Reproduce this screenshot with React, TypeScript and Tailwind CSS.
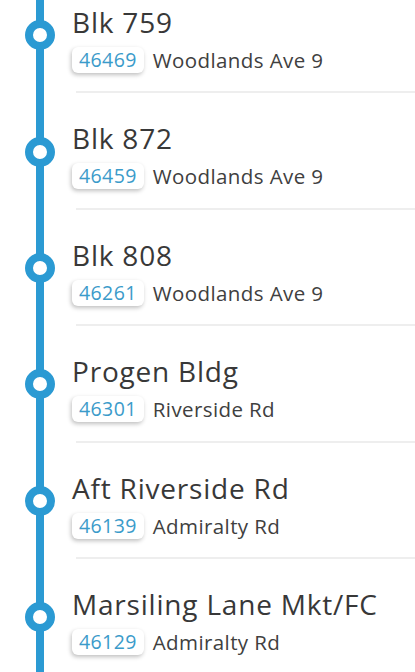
const stops = [
  { name: 'Blk 759', code: '46469', road: 'Woodlands Ave 9' },
  { name: 'Blk 872', code: '46459', road: 'Woodlands Ave 9' },
  { name: 'Blk 808', code: '46261', road: 'Woodlands Ave 9' },
  { name: 'Progen Bldg', code: '46301', road: 'Riverside Rd' },
  { name: 'Aft Riverside Rd', code: '46139', road: 'Admiralty Rd' },
  { name: 'Marsiling Lane Mkt/FC', code: '46129', road: 'Admiralty Rd' },
]

export default function App() {
  return (
    <div className="h-[672px] w-[415px] overflow-hidden bg-white" style={{ fontFamily: '"Open Sans", sans-serif' }}>
      <div className="-mt-[23px]">
        {stops.map((s) => (
          <div key={s.code} className="flex h-[116.4px]">
            {/* timeline */}
            <div className="relative w-[72px] shrink-0">
              <div className="absolute left-[36px] top-0 bottom-0 w-2 bg-[#2b9ad3]" />
              <div className="absolute left-[25px] top-1/2 -translate-y-1/2 size-[30px] rounded-full border-8 border-[#2b9ad3] bg-white" />
            </div>
            <div className="flex flex-1 flex-col">
              <div className="pt-[30px] text-[28px] leading-[30px] tracking-[0.8px] text-[#383838]">{s.name}</div>
              <div className="mt-[10px] flex items-center gap-[9px]">
                <span className="h-[26px] rounded-md bg-white px-[7px] text-[19.5px] leading-[26px] tracking-[0.4px] text-[#3b9bca] shadow-[-1px_2px_4px_rgba(0,0,0,0.25)]">
                  {s.code}
                </span>
                <span className="text-[20.5px] leading-[26px] tracking-[0.4px] text-[#404040]">{s.road}</span>
              </div>
              <div className="mt-auto ml-1 h-[2px] bg-[#eeeeee]" />
            </div>
          </div>
        ))}
      </div>
    </div>
  )
}
